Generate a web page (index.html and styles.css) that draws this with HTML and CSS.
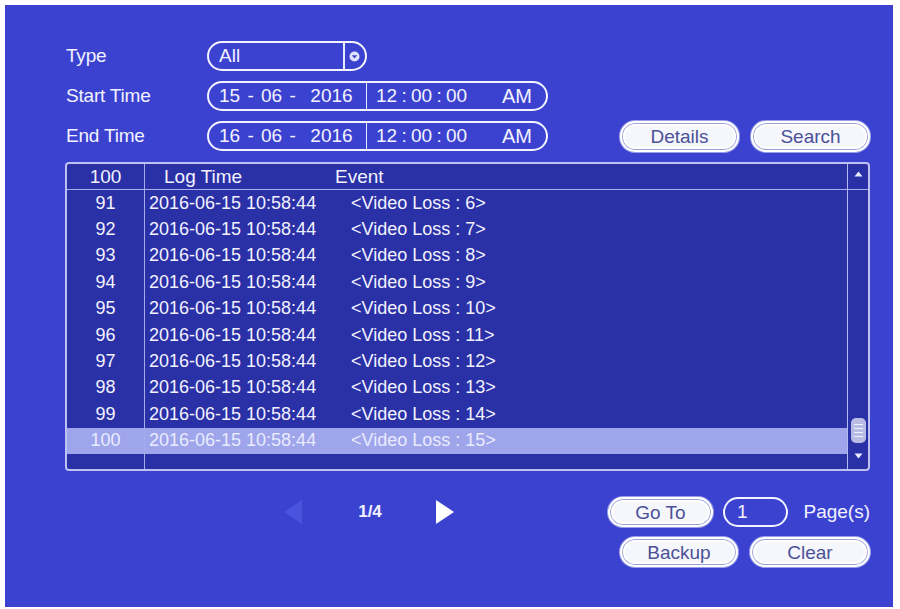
FILE: index.html
```html
<!DOCTYPE html>
<html>
<head>
<meta charset="utf-8">
<title>Log Search</title>
<link rel="stylesheet" href="styles.css">
</head>
<body>
<div class="panel">
  <div class="form">
    <div class="frow">
      <span class="label">Type</span>
      <div class="field select">
        <span class="sel-text">All</span>
        <span class="sel-arrow">
          <svg width="11" height="11" viewBox="0 0 11 11"><circle cx="5.5" cy="5.5" r="5" fill="#dfe2ff"/><path d="M2.8 4.2 L8.2 4.2 L5.5 7.6 Z" fill="#3c42d0"/></svg>
        </span>
      </div>
    </div>
    <div class="frow">
      <span class="label">Start Time</span>
      <div class="field datetime">
        <span class="date">15 - 06 -  2016</span>
        <span class="time">12 : 00 : 00</span>
        <span class="ampm">AM</span>
      </div>
    </div>
    <div class="frow">
      <span class="label">End Time</span>
      <div class="field datetime">
        <span class="date">16 - 06 -  2016</span>
        <span class="time">12 : 00 : 00</span>
        <span class="ampm">AM</span>
      </div>
      <div class="btns">
        <button class="btn">Details</button>
        <button class="btn">Search</button>
      </div>
    </div>
  </div>

  <div class="table">
    <div class="tmain">
      <div class="thead">
        <div class="c1">100</div>
        <div class="c2"><span class="h-time">Log Time</span><span class="h-event">Event</span></div>
      </div>
      <div class="tr"><div class="c1">91</div><div class="c2"><span class="t">2016-06-15 10:58:44</span><span class="e">&lt;Video Loss : 6&gt;</span></div></div>
      <div class="tr"><div class="c1">92</div><div class="c2"><span class="t">2016-06-15 10:58:44</span><span class="e">&lt;Video Loss : 7&gt;</span></div></div>
      <div class="tr"><div class="c1">93</div><div class="c2"><span class="t">2016-06-15 10:58:44</span><span class="e">&lt;Video Loss : 8&gt;</span></div></div>
      <div class="tr"><div class="c1">94</div><div class="c2"><span class="t">2016-06-15 10:58:44</span><span class="e">&lt;Video Loss : 9&gt;</span></div></div>
      <div class="tr"><div class="c1">95</div><div class="c2"><span class="t">2016-06-15 10:58:44</span><span class="e">&lt;Video Loss : 10&gt;</span></div></div>
      <div class="tr"><div class="c1">96</div><div class="c2"><span class="t">2016-06-15 10:58:44</span><span class="e">&lt;Video Loss : 11&gt;</span></div></div>
      <div class="tr"><div class="c1">97</div><div class="c2"><span class="t">2016-06-15 10:58:44</span><span class="e">&lt;Video Loss : 12&gt;</span></div></div>
      <div class="tr"><div class="c1">98</div><div class="c2"><span class="t">2016-06-15 10:58:44</span><span class="e">&lt;Video Loss : 13&gt;</span></div></div>
      <div class="tr"><div class="c1">99</div><div class="c2"><span class="t">2016-06-15 10:58:44</span><span class="e">&lt;Video Loss : 14&gt;</span></div></div>
      <div class="tr sel"><div class="c1">100</div><div class="c2"><span class="t">2016-06-15 10:58:44</span><span class="e">&lt;Video Loss : 15&gt;</span></div></div>
      <div class="tfill"><div class="c1"></div><div class="c2"></div></div>
    </div>
    <div class="scroll">
      <div class="sc-head">
        <svg width="9" height="6" viewBox="0 0 9 6"><path d="M0.5 5.5 L8.5 5.5 L4.5 0.5 Z" fill="#e8eaff"/></svg>
      </div>
      <div class="sc-track"></div>
      <div class="sc-thumb"><i></i><i></i><i></i><i></i></div>
      <div class="sc-down">
        <svg width="9" height="6" viewBox="0 0 9 6"><path d="M0.5 0.5 L8.5 0.5 L4.5 5.5 Z" fill="#e8eaff"/></svg>
      </div>
    </div>
  </div>

  <div class="bottom">
    <div class="brow">
      <div class="pager">
        <svg class="prev" width="20" height="26" viewBox="0 0 20 26"><path d="M19 1 L19 25 L1 13 Z" fill="#4a53dc"/></svg>
        <span class="pnum">1/4</span>
        <svg class="next" width="20" height="26" viewBox="0 0 20 26"><path d="M1 1 L1 25 L19 13 Z" fill="#ffffff"/></svg>
      </div>
      <div class="goto">
        <button class="btn b-goto">Go To</button>
        <div class="field pageinput">1</div>
        <span class="pages">Page(s)</span>
      </div>
    </div>
    <div class="brow end">
      <button class="btn b-backup">Backup</button>
      <button class="btn b-clear">Clear</button>
    </div>
  </div>
</div>
</body>
</html>
```

FILE: styles.css
```css
html, body {
  margin: 0;
  padding: 0;
  background: #ffffff;
}

body {
  font-family: "Liberation Sans", Arial, sans-serif;
  color: #f2f2ff;
}

.panel {
  box-sizing: border-box;
  margin: 5px 7px 2px 5px;
  width: 888px;
  height: 602px;
  background: #3c42d0;
  padding: 36px 23px 0 60px;
  display: flex;
  flex-direction: column;
}

/* ---------- form ---------- */
.form {
  display: flex;
  flex-direction: column;
  gap: 10px;
}

.frow {
  display: flex;
  align-items: center;
  height: 30px;
}

.label {
  width: 142px;
  padding-left: 1px;
  box-sizing: border-box;
  font-size: 19px;
  letter-spacing: -0.2px;
}

.field {
  box-sizing: border-box;
  height: 30px;
  border: 2px solid #f4f4ff;
  border-radius: 15px;
  display: flex;
  align-items: center;
  font-size: 19px;
}

.select {
  width: 160px;
}

.sel-text {
  width: 136px;
  box-sizing: border-box;
  padding-left: 10px;
  height: 100%;
  display: flex;
  align-items: center;
  border-right: 2px solid #e8eaff;
}

.sel-arrow {
  flex: 1;
  display: flex;
  justify-content: center;
  align-items: center;
  padding-right: 2px;
}

.datetime {
  width: 341px;
}

.date {
  white-space: pre;
  word-spacing: 2px;
  width: 158px;
  box-sizing: border-box;
  padding-left: 10px;
  height: 100%;
  display: flex;
  align-items: center;
  border-right: 1px solid #e8eaff;
}

.time {
  white-space: pre;
  word-spacing: -1px;
  padding-left: 9px;
  width: 135px;
  box-sizing: border-box;
}

.ampm {
  font-size: 20px;
}

.btns {
  margin-left: auto;
  display: flex;
  gap: 12px;
}

.btn {
  box-sizing: border-box;
  height: 31px;
  width: 119px;
  border: 2px solid #ffffff;
  border-radius: 15px;
  background: #f6f6fd;
  box-shadow: inset 0 0 0 1px #9ca2d8, inset 0 0 0 3px #ffffff, 0 0 0 1px #9aa0e8;
  color: #4a5196;
  font-family: "Liberation Sans", Arial, sans-serif;
  font-size: 19px;
  padding: 0;
  line-height: 1;
}

/* ---------- table ---------- */
.table {
  margin-top: 11px;
  height: 309px;
  box-sizing: border-box;
  border: 2px solid #bcc1f2;
  border-radius: 4px;
  background: #2a30a6;
  display: flex;
  overflow: hidden;
}

.tmain {
  flex: 1;
  display: flex;
  flex-direction: column;
}

.thead,
.tr,
.tfill {
  display: grid;
  grid-template-columns: 78px 1fr;
}

.thead {
  height: 26px;
  box-sizing: border-box;
  border-bottom: 1px solid #aab0ee;
  font-size: 19px;
}

.tr {
  height: 26.4px;
  font-size: 18px;
}

.tfill {
  flex: 1;
}

.c1 {
  border-right: 1px solid #a4aaec;
  display: flex;
  align-items: center;
  justify-content: center;
}

.c2 {
  display: flex;
  align-items: center;
}

.h-time {
  padding-left: 19px;
  width: 190px;
  box-sizing: border-box;
}

.t {
  padding-left: 4px;
  width: 206px;
  box-sizing: border-box;
}

.sel {
  background: #9fa5ea;
  color: #e9ebff;
}

.scroll {
  width: 20px;
  border-left: 1px solid #b4baf0;
  display: flex;
  flex-direction: column;
  align-items: center;
}

.sc-head {
  height: 26px;
  width: 100%;
  box-sizing: border-box;
  border-bottom: 1px solid #aab0ee;
  display: flex;
  justify-content: center;
  padding-top: 7px;
}

.sc-track {
  flex: 1;
}

.sc-thumb {
  width: 15px;
  height: 25px;
  box-sizing: border-box;
  border-radius: 5px;
  background: #b9bde6;
  display: flex;
  flex-direction: column;
  justify-content: center;
  gap: 3px;
  padding: 0 3px;
}

.sc-thumb i {
  display: block;
  height: 1px;
  background: #f0f1ff;
}

.sc-down {
  height: 26px;
  display: flex;
  align-items: center;
  justify-content: center;
}

/* ---------- bottom ---------- */
.bottom {
  margin-top: 26px;
  display: flex;
  flex-direction: column;
  gap: 10px;
}

.brow {
  display: flex;
  align-items: center;
  height: 30px;
}

.brow.end {
  justify-content: flex-end;
  gap: 12px;
}

.pager {
  margin-left: 218px;
  display: flex;
  align-items: center;
}

.pnum {
  margin-left: 54px;
  width: 26px;
  text-align: center;
  font-size: 17px;
  font-weight: bold;
}

.next {
  margin-left: 52px;
}

.goto {
  margin-left: auto;
  display: flex;
  align-items: center;
  gap: 10px;
}

.b-goto {
  width: 105px;
  height: 30px;
}

.pageinput {
  width: 65px;
  padding-left: 12px;
}

.pages {
  font-size: 19px;
  width: 72px;
  text-align: right;
}

.b-backup {
  width: 118px;
  height: 30px;
}

.b-clear {
  width: 120px;
  height: 30px;
}
```
